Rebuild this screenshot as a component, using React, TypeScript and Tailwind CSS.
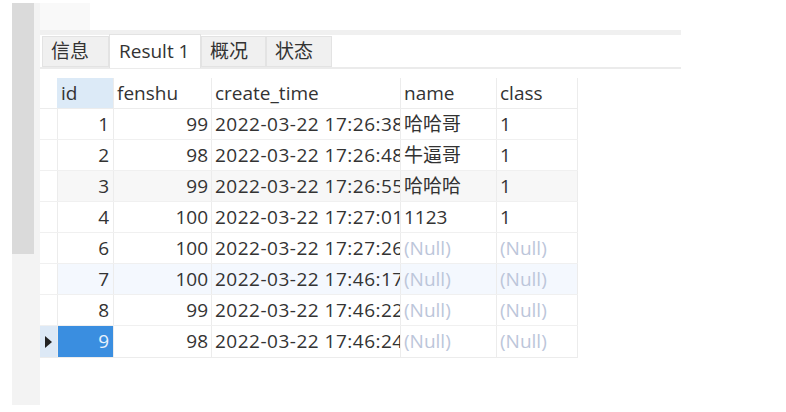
import React from 'react';

type Row = {
  id: number;
  fenshu: number;
  time: string;
  name: string | null;
  cls: string | null;
  bg?: string;
};

const rows: Row[] = [
  { id: 1, fenshu: 99, time: '2022-03-22 17:26:38', name: '哈哈哥', cls: '1' },
  { id: 2, fenshu: 98, time: '2022-03-22 17:26:48', name: '牛逼哥', cls: '1' },
  { id: 3, fenshu: 99, time: '2022-03-22 17:26:55', name: '哈哈哈', cls: '1', bg: 'bg-[#f7f7f7]' },
  { id: 4, fenshu: 100, time: '2022-03-22 17:27:01', name: '1123', cls: '1' },
  { id: 6, fenshu: 100, time: '2022-03-22 17:27:26', name: null, cls: null },
  { id: 7, fenshu: 100, time: '2022-03-22 17:46:17', name: null, cls: null, bg: 'bg-[#f4f8fe]' },
  { id: 8, fenshu: 99, time: '2022-03-22 17:46:22', name: null, cls: null },
  { id: 9, fenshu: 98, time: '2022-03-22 17:46:24', name: null, cls: null },
];

const font = { fontFamily: '"Open Sans", "Noto Sans CJK SC", sans-serif' };

function Cell({ value, right, w, wide }: { value: string | null; right?: boolean; w: string; wide?: boolean }) {
  return (
    <div
      className={`${w} h-full shrink-0 overflow-hidden whitespace-nowrap border-r border-[#ececec] flex items-center px-[3px] ${
        right ? 'justify-end' : ''
      } ${wide ? 'tracking-[0.5px]' : ''}`}
    >
      {value === null ? <span className="text-[#bcc6da]">(Null)</span> : value}
    </div>
  );
}

function Tab({ label, active }: { label: string; active?: boolean }) {
  if (active) {
    return (
      <div className="w-[92px] h-[34px] -mb-px bg-white border border-b-0 border-[#e3e3e3] flex items-center pl-[9px]">
        {label}
      </div>
    );
  }
  return (
    <div className="h-[31px] bg-[#f0f0f0] border border-[#e3e3e3] flex items-center pl-[8px] pr-[10px]">{label}</div>
  );
}

export default function App() {
  return (
    <div className="w-[786px] h-[412px] bg-white flex pt-[3px] pl-[12px] text-[19px] text-[#333]" style={font}>
      <div className="w-[28px] h-[402px] bg-[#f3f3f3] flex">
        <div className="w-[22px] h-[251px] bg-[#dadada]" />
      </div>
      <div className="flex flex-col">
        <div className="flex h-[27px]">
          <div className="w-[50px] bg-[#f9f9f9]" />
        </div>
        <div className="w-[641px] h-[5px] bg-[#f0f0f0]" />
        <div className="w-[641px] flex items-end h-[34px] border-b-2 border-[#ebebeb] pl-[2px]">
          <div className="w-[67px]">
            <Tab label="信息" />
          </div>
          <Tab label="Result 1" active />
          <div className="w-[65px]">
            <Tab label="概况" />
          </div>
          <div className="w-[66px]">
            <Tab label="状态" />
          </div>
        </div>
        <div className="mt-[9px] w-[538px] border-b border-[#ececec]">
          <div className="flex h-[31px] border-b border-[#ececec]">
            <div className="w-[17px] shrink-0" />
            <div className="w-[57px] bg-[#dceaf7] border-r border-[#ececec] flex items-center px-[4px]">id</div>
            <div className="w-[98px] border-r border-[#ececec] flex items-center px-[3px]">fenshu</div>
            <div className="w-[189px] border-r border-[#ececec] flex items-center px-[3px]">create_time</div>
            <div className="w-[96px] border-r border-[#ececec] flex items-center px-[3px]">name</div>
            <div className="w-[81px] border-r border-[#ececec] flex items-center px-[3px]">class</div>
          </div>
          {rows.map((r) => {
            const sel = r.id === 9;
            return (
              <div key={r.id} className={`flex h-[31px] border-b border-[#f0f0f0] last:border-b-0 ${r.bg ?? ''}`}>
                <div
                  className={`w-[17px] shrink-0 flex items-center justify-center ${
                    sel ? 'bg-[#dde9f6]' : 'bg-white'
                  }`}
                >
                  {sel && (
                    <svg width="7" height="12" viewBox="0 0 7 12">
                      <path d="M0 0 L7 6 L0 12 Z" fill="#222" />
                    </svg>
                  )}
                </div>
                <div
                  className={`w-[57px] h-full shrink-0 border-x border-[#ececec] flex items-center justify-end px-[4px] ${
                    sel ? 'bg-[#3a8ee0] text-[#e8f2fc]' : ''
                  }`}
                >
                  {r.id}
                </div>
                <Cell w="w-[98px]" value={String(r.fenshu)} right />
                <Cell w="w-[189px]" value={r.time} wide />
                <Cell w="w-[96px]" value={r.name} />
                <Cell w="w-[81px]" value={r.cls} />
              </div>
            );
          })}
        </div>
      </div>
    </div>
  );
}
